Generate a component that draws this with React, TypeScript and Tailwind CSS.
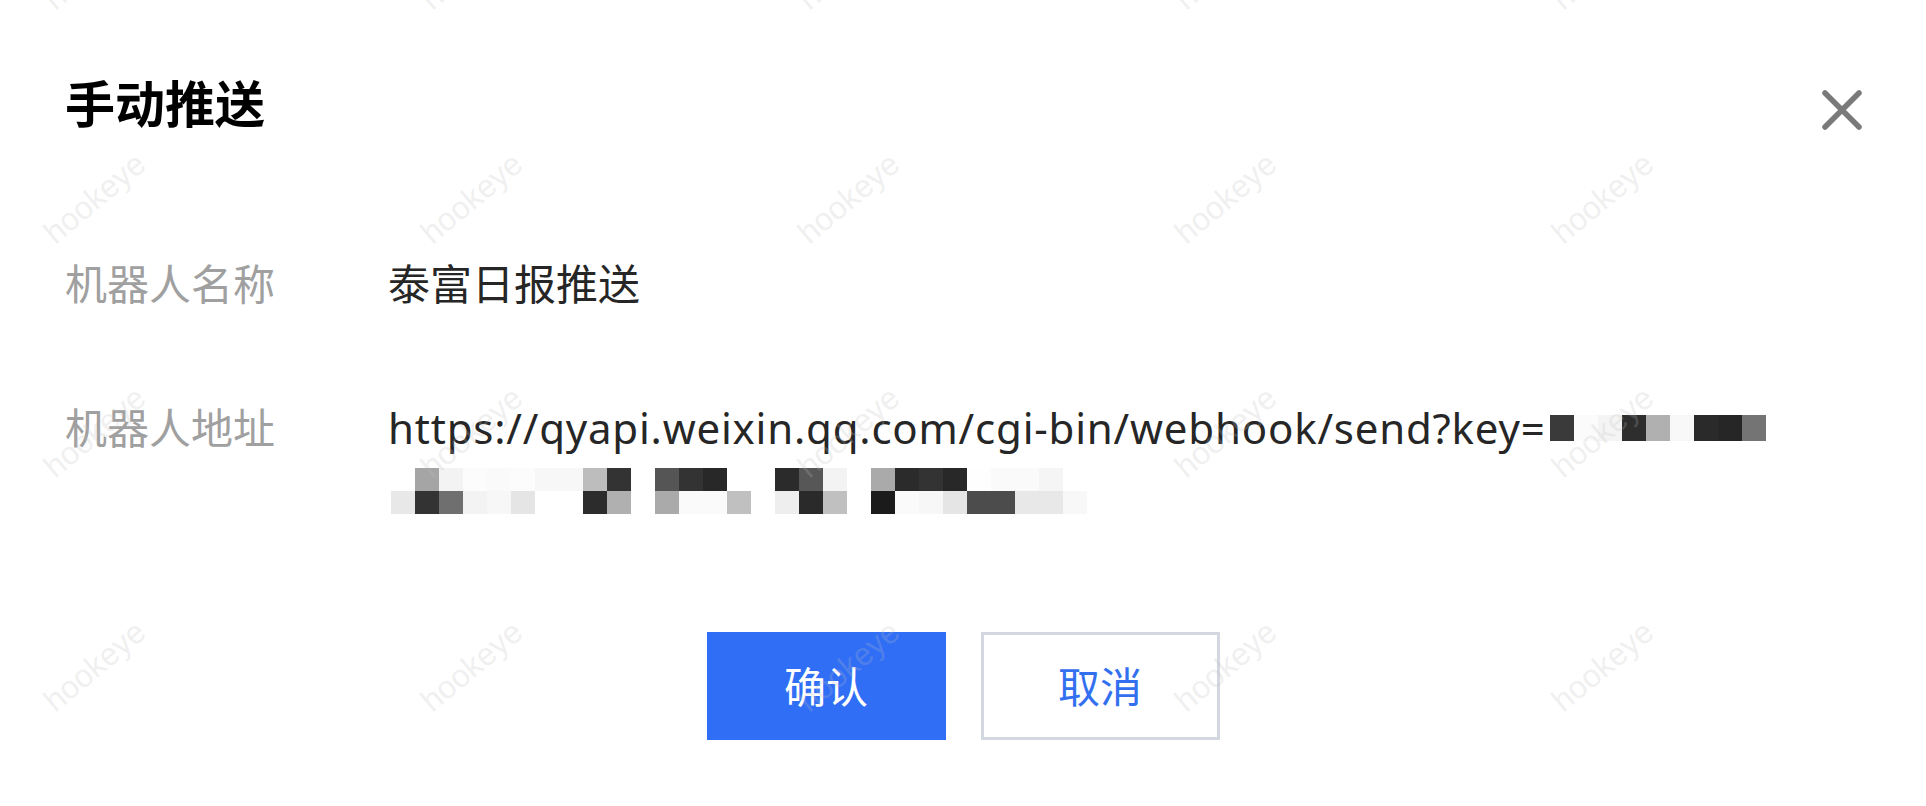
// Manual push dialog with pixelated webhook key and hookeye watermark
const FONT = "font-['Noto_Sans','Noto_Sans_CJK_SC',sans-serif]";

// Pixelated (redacted) blocks, colours read off the screenshot
const keyTail = ["#3a3a3a", "#fbfbfb", "#f4f4f4", "#2e2e2e", "#b0b0b0", "#f8f8f8", "#2a2a2a", "#262626", "#747474"];
const keyTop = [
  "#ffffff", "#a5a5a5", "#f3f3f3", "#fcfcfc", "#fafafa", "#fcfcfc", "#f7f7f7", "#f7f7f7", "#bdbdbd", "#333333",
  "#ffffff", "#555555", "#333333", "#282828", "#ffffff", "#ffffff", "#2b2b2b", "#575757", "#f3f3f3", "#ffffff",
  "#aaaaaa", "#2b2b2b", "#333333", "#282828", "#fefefe", "#fafafa", "#fafafa", "#f5f5f5", "#ffffff",
];
const keyBottom = [
  "#e8e8e8", "#333333", "#6f6f6f", "#f3f3f3", "#f7f7f7", "#e5e5e5", "#ffffff", "#ffffff", "#2c2c2c", "#b0b0b0",
  "#ffffff", "#aaaaaa", "#fafafa", "#fafafa", "#c0c0c0", "#ffffff", "#eeeeee", "#2a2a2a", "#c0c0c0", "#ffffff",
  "#1b1b1b", "#fafafa", "#f7f7f7", "#e5e5e5", "#4c4c4c", "#4c4c4c", "#e8e8e8", "#e8e8e8", "#f8f8f8",
];

const Blocks = ({ colors }: { colors: string[] }) => (
  <div className="flex">
    {colors.map((c, i) => (
      <div key={i} className="w-[24px] h-[23px]" style={{ backgroundColor: c }} />
    ))}
  </div>
);

const Watermark = () => (
  <div className="pointer-events-none absolute left-[-94px] top-[-153px] grid grid-cols-[repeat(6,377px)] auto-rows-[234px]">
    {Array.from({ length: 30 }).map((_, i) => (
      <div key={i} className="flex items-center justify-center">
        <span className="rotate-[-40deg] font-['Liberation_Sans',sans-serif] text-[32px] text-[rgba(190,190,190,0.24)]">
          hookeye
        </span>
      </div>
    ))}
  </div>
);

export default function App() {
  return (
    <div className={`relative w-[1926px] h-[806px] overflow-hidden bg-white ${FONT}`}>
      <div className="pl-[65px] pr-[64px] pt-[72px]">
        {/* Header */}
        <div className="flex items-start justify-between">
          <h1 className="h-[64px] leading-[64px] text-[50px] font-bold text-black">手动推送</h1>
          <button className="mt-[18px] w-[40px] h-[40px]">
            <svg viewBox="0 0 40 40" className="w-[40px] h-[40px]">
              <path d="M3 3 L37 37 M37 3 L3 37" stroke="#7a7a7a" strokeWidth="5.5" strokeLinecap="round" />
            </svg>
          </button>
        </div>

        {/* Rows */}
        <div className="mt-[116px] flex text-[42px] leading-[63px]">
          <div className="w-[323px] text-[#a0a0a0]">机器人名称</div>
          <div className="text-[#262626]">泰富日报推送</div>
        </div>
        <div className="mt-[81px] flex text-[42px] leading-[63px]">
          <div className="w-[323px] text-[#a0a0a0]">机器人地址</div>
          <div className="text-[#262626]">
            <div className="flex items-center">
              <span className="tracking-[0.8px]">https://qyapi.weixin.qq.com/cgi-bin/webhook/send?key=</span>
              <div className="flex ml-[4px]">
                {keyTail.map((c, i) => (
                  <div key={i} className="w-[24px] h-[26px]" style={{ backgroundColor: c }} />
                ))}
              </div>
            </div>
            <div className="h-[63px] flex flex-col justify-center pl-[3px]">
              <Blocks colors={keyTop} />
              <Blocks colors={keyBottom} />
            </div>
          </div>
        </div>

        {/* Actions */}
        <div className="mt-[110px] flex justify-center gap-[35px] pr-[1px]">
          <button className="w-[239px] h-[108px] bg-[#306ef6] text-white text-[42px]">确认</button>
          <button className="w-[239px] h-[108px] border-[3px] border-[#d3d7df] bg-white text-[#3370f0] text-[42px]">
            取消
          </button>
        </div>
      </div>
      <Watermark />
    </div>
  );
}
